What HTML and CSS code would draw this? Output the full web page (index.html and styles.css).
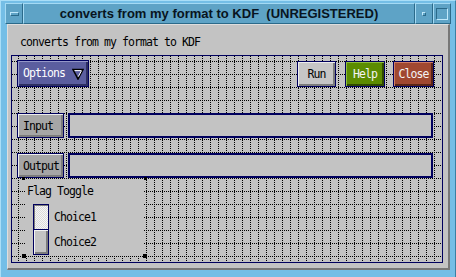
FILE: index.html
```html
<!DOCTYPE html>
<html>
<head>
  <meta charset="UTF-8">
  <link rel="stylesheet" href="styles.css">
</head>
<body>
  <div class="frame">
    <div class="titlebar">
      <div class="tb-btn"><span class="menu-icon"></span></div>
      <div class="tb-title">converts from my format to KDF  (UNREGISTERED)</div>
      <div class="tb-btn"><span class="min-icon"></span></div>
      <div class="tb-btn"><span class="max-icon"></span></div>
    </div>

    <div class="client">
      <p class="desc">converts from my format to KDF</p>

      <div class="canvas">
        <div class="top-row">
          <div class="btn options">
            <span>Options</span>
            <svg class="arrow" width="12" height="12" viewBox="0 0 12 12">
              <polygon points="1,1.5 11,1.5 6,11" fill="#5b5e9f" stroke="#000" stroke-width="1.6" stroke-linejoin="miter"/>
              <line x1="2.5" y1="2.6" x2="9.5" y2="2.6" stroke="#fff" stroke-width="1"/>
              <line x1="9.3" y1="3" x2="6.3" y2="8.6" stroke="#fff" stroke-width="1"/>
            </svg>
          </div>
          <div class="actions">
            <div class="btn run">Run</div>
            <div class="btn help">Help</div>
            <div class="btn close">Close</div>
          </div>
        </div>

        <div class="field-row first">
          <div class="btn field-btn">Input</div>
          <div class="field"></div>
        </div>

        <div class="field-row">
          <div class="btn field-btn">Output</div>
          <div class="field"></div>
        </div>

        <div class="group">
          <span class="handle tl"></span>
          <span class="handle tr"></span>
          <span class="handle bl"></span>
          <span class="handle br"></span>
          <div class="group-label">Flag Toggle</div>
          <div class="choice first">
            <span class="toggle on"></span>
            <span>Choice1</span>
          </div>
          <div class="choice">
            <span class="toggle"></span>
            <span>Choice2</span>
          </div>
        </div>
      </div>
    </div>
  </div>
</body>
</html>
```

FILE: styles.css
```css
* { box-sizing: border-box; }
body { margin: 0; width: 456px; height: 277px; overflow: hidden; background: #74bee6; font-family: "DejaVu Sans Mono", monospace; font-size: 11.5px; letter-spacing: -0.92px; color: #000; }

/* window frame */
.frame { height: 277px; padding: 2px 4px 0 4px; border-top: 1px solid #a9def7; border-left: 1px solid #a9def7; border-right: 1px solid #3a7fa2; }
.titlebar { display: flex; height: 21px; background: #5ea3c6; }
.tb-btn { width: 18px; display: flex; align-items: center; justify-content: center; border-top: 1px solid #a4daf4; border-left: 1px solid #a4daf4; border-right: 1px solid #2b6a8a; border-bottom: 1px solid #2b6a8a; }
.tb-title { flex: 1; display: flex; align-items: center; justify-content: center; white-space: pre; font-family: "Liberation Sans", Arial, sans-serif; font-weight: bold; font-size: 13px; letter-spacing: 0; color: #081420; border-top: 1px solid #a4daf4; border-left: 1px solid #a4daf4; border-right: 1px solid #2b6a8a; border-bottom: 1px solid #2b6a8a; }
.menu-icon { width: 9px; height: 4px; border-top: 1px solid #bfe8fb; border-left: 1px solid #bfe8fb; border-right: 1px solid #2b6a8a; border-bottom: 1px solid #2b6a8a; margin-top: 1px; }
.min-icon { width: 4px; height: 4px; border-top: 1px solid #bfe8fb; border-left: 1px solid #bfe8fb; border-right: 1px solid #2b6a8a; border-bottom: 1px solid #2b6a8a; }
.max-icon { width: 12px; height: 12px; border-top: 1px solid #2b6a8a; border-left: 1px solid #2b6a8a; border-right: 1px solid #bfe8fb; border-bottom: 1px solid #bfe8fb; }

/* client area */
.client { margin-left: 2px; width: 443px; height: 246px; padding-left: 3px; background: #c3c3c3; border-top: 1px solid #dedede; border-left: 1px solid #dedede; border-right: 2px solid #777; border-bottom: 2px solid #777; }
.desc { margin: 11px 0 0; padding-left: 9px; line-height: 13px; }

/* grid canvas */
.canvas { margin-top: 6px; width: 432px; height: 208px; padding: 4px 8px 0 5px; border: 1px solid #00005e;
  background-color: #c3c3c3;
  background-image:
    conic-gradient(from 270deg at 1px 1px, #000 0 90deg, transparent 90deg),
    conic-gradient(from 270deg at 1px 1px, #000 0 90deg, transparent 90deg);
  background-size: 8px 2px, 2px 13px;
  background-position: 6px 0, 0 5px; }

.btn { display: flex; align-items: center; line-height: 13px; border: 1px solid #00005e; box-shadow: inset 1px 1px #ececec, inset -2px -2px #7c7c7c; }
.top-row { display: flex; justify-content: space-between; align-items: flex-start; }
.options { width: 72px; height: 27px; justify-content: space-between; padding: 0 4px 0 5px; background: #5b5e9f; color: #fff; box-shadow: inset 1px 1px #9497c8, inset -2px -2px #2d2f62; }
.arrow { display: block; }
.actions { display: flex; gap: 8px; margin-top: 1px; }
.run, .help, .close { height: 26px; justify-content: center; }
.run { width: 39px; margin-right: 1px; background: #c6c6c6; }
.help { width: 40px; background: #5b8c00; color: #f4f4f4; box-shadow: inset 1px 1px #8fbd3c, inset -2px -2px #2f4a00; }
.close { width: 41px; background: #a04830; color: #f4f4f4; box-shadow: inset 1px 1px #cf7d63, inset -2px -2px #5a2416; }

.field-row { display: flex; gap: 4px; margin-top: 15px; }
.field-row.first { margin-top: 26px; }
.field-btn { width: 47px; height: 25px; padding: 2px 0 0 5px; background: #a6a6a6; }
.field { width: 365px; height: 25px; border: 2px solid #00005e; background: #c3c3c3; }

/* toggle group */
.group { position: relative; margin: 1px 0 0 9px; width: 118px; height: 77px; padding-top: 6px; background: #c3c3c3; }
.handle { position: absolute; background: #000; width: 3px; height: 3px; }
.handle.tl { left: -4px; top: -2px; }
.handle.tr { right: -3px; top: -2px; }
.handle.bl { left: -4px; bottom: -2px; width: 4px; height: 4px; }
.handle.br { right: -3px; bottom: -2px; width: 4px; height: 4px; }
.group-label { line-height: 13px; padding-left: 1px; }
.choice { display: flex; align-items: center; gap: 5px; margin-left: 7px; margin-top: -1px; }
.choice.first { margin-top: 6px; }
.toggle { width: 16px; height: 26px; border: 1px solid #00005e; background: #c3c3c3; box-shadow: inset 1px 1px #f2f2f2, inset -2px -2px #7c7c7c; }
.toggle.on { box-shadow: inset 1px 1px #7c7c7c;
  background-color: #dadada;
  background-image: conic-gradient(from 270deg at 1px 1px, #f6f6f6 0 90deg, transparent 90deg), conic-gradient(from 90deg at 1px 1px, #f6f6f6 0 90deg, transparent 90deg);
  background-size: 2px 2px, 2px 2px; }
```
